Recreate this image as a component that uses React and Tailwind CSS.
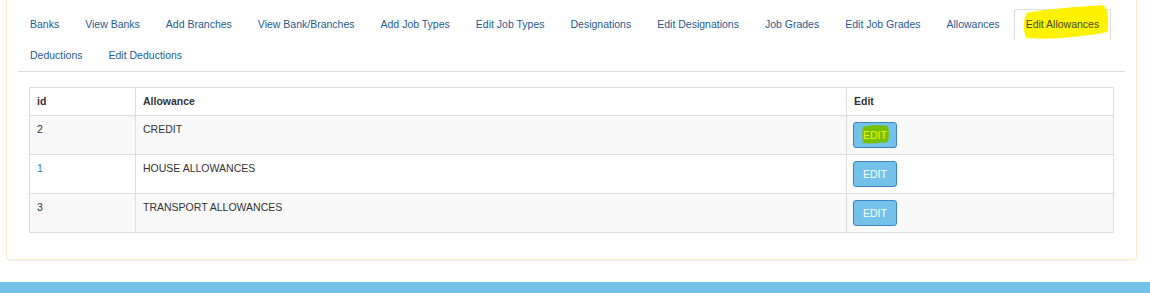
import React from 'react'

const row1 = [
  'Banks', 'View Banks', 'Add Branches', 'View Bank/Branches', 'Add Job Types',
  'Edit Job Types', 'Designations', 'Edit Designations', 'Job Grades',
  'Edit Job Grades', 'Allowances', 'Edit Allowances',
]
const row2 = ['Deductions', 'Edit Deductions']

const rows = [
  { id: '2', name: 'CREDIT', marked: true },
  { id: '1', name: 'HOUSE ALLOWANCES', link: true },
  { id: '3', name: 'TRANSPORT ALLOWANCES' },
]

// one tab of the nav bar
const Tab = ({ label, active }) => (
  <li className="mr-[2px]">
    {active ? (
      <a className="relative block px-[11px] py-[7px] leading-[15px] border border-[#ddd] border-b-transparent rounded-t-[3px] bg-white text-[#3f4c19]">
        {/* yellow marker scribble */}
        <svg className="absolute left-[7px] top-[-6px]" width="88" height="36" viewBox="0 0 88 36">
          <path d="M5 9 C 22 5, 55 3, 80 1 C 87 3, 87 18, 85 28 C 62 33, 25 36, 4 34 C 1 26, 1 15, 5 9 Z" fill="#fff200" />
        </svg>
        <span className="relative">{label}</span>
      </a>
    ) : (
      <a className="block px-[11px] py-[7px] leading-[15px] border border-transparent rounded-t-[3px] text-[#1f5b94]">
        {label}
      </a>
    )}
  </li>
)

const EditButton = ({ marked }) => (
  <button className="relative w-[44px] h-[26px] border border-[#3d86c6] bg-[#74c1ea] rounded-[3px] text-[10.5px] leading-none">
    {marked && (
      <svg className="absolute left-[7px] top-[1px]" width="29" height="20" viewBox="0 0 29 20">
        <path d="M2 3 C 8 1, 20 1, 27 2 C 28 7, 28 14, 27 18 C 20 19, 9 20, 2 19 C 1 13, 1 7, 2 3 Z" fill="#78c100" />
      </svg>
    )}
    <span className={`relative ${marked ? 'text-[#f2f200]' : 'text-white'}`}>EDIT</span>
  </button>
)

export default function App() {
  return (
    <div className="w-[1150px] h-[293px] bg-white flex flex-col font-['Liberation_Sans',Arial,sans-serif] text-[10.5px] text-[#333]">
      {/* Panel */}
      <div className="ml-[6px] w-[1131px] border-x border-b border-[#faebcc] rounded-b-[4px] shadow-[0_1px_1px_rgba(0,0,0,0.05)] px-[11px] pt-[9px] pb-[26px]">
        <ul className="border-b border-[#ddd]">
          <div className="flex">
            {row1.map((t) => (
              <Tab key={t} label={t} active={t === 'Edit Allowances'} />
            ))}
          </div>
          <div className="flex">
            {row2.map((t) => (
              <Tab key={t} label={t} />
            ))}
          </div>
        </ul>

        {/* Table */}
        <div className="mt-[15px] mx-[11px]">
          <table className="w-full border-collapse">
            <thead>
              <tr className="h-[28px]">
                <th className="w-[106px] border border-[#ddd] px-[7px] text-left font-bold align-middle">id</th>
                <th className="w-[711px] border border-[#ddd] px-[7px] text-left font-bold align-middle">Allowance</th>
                <th className="border border-[#ddd] px-[7px] text-left font-bold align-middle">Edit</th>
              </tr>
            </thead>
            <tbody>
              {rows.map((r, i) => (
                <tr key={r.id} className={`h-[39px] ${i % 2 === 0 ? 'bg-[#f9f9f9]' : 'bg-white'}`}>
                  <td className={`border border-[#ddd] px-[7px] pt-[5px] leading-[16px] align-top ${r.link ? 'text-[#337ab7]' : ''}`}>
                    {r.id}
                  </td>
                  <td className="border border-[#ddd] px-[7px] pt-[5px] leading-[16px] align-top">{r.name}</td>
                  <td className="border border-[#ddd] px-[6px] pt-[6px] align-top">
                    <EditButton marked={r.marked} />
                  </td>
                </tr>
              ))}
            </tbody>
          </table>
        </div>
      </div>

      {/* Footer bar */}
      <div className="mt-auto h-[11px] bg-[#74c1ea]" />
    </div>
  )
}
